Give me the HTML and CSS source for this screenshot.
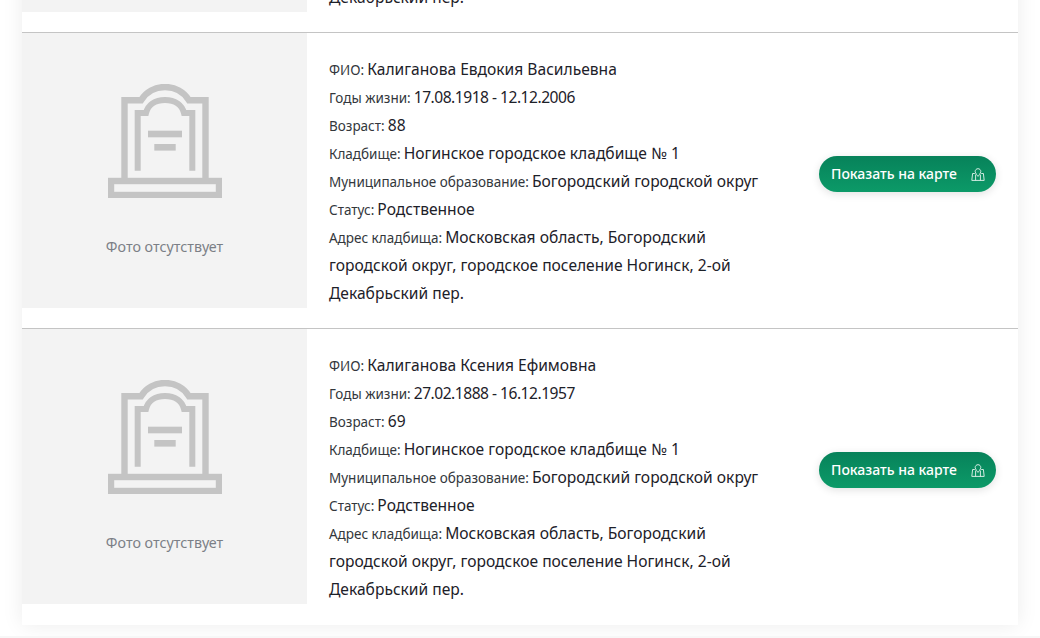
FILE: index.html
```html
<!DOCTYPE html>
<html lang="ru">
<head>
<meta charset="utf-8">
<title>Результаты поиска</title>
<link rel="stylesheet" href="styles.css">
</head>
<body>
<svg class="defs" width="0" height="0" aria-hidden="true">
  <symbol id="grave" viewBox="0 0 114 114">
    <path d="M16.5 94V16.3H33C38 8 47 3 57 3S76 8 81 16.3H97.5V94" fill="none" stroke="currentColor" stroke-width="6.4"/>
    <path d="M29.7 86.7V29H38C40 21 47 16 57 16S74 21 76 29H84.3V86.7" fill="none" stroke="currentColor" stroke-width="6"/>
    <rect x="3" y="97" width="108" height="14" fill="none" stroke="currentColor" stroke-width="6.4"/>
    <rect x="40" y="46.7" width="34" height="6.6" fill="currentColor"/>
    <rect x="46.3" y="60" width="21.4" height="6.6" fill="currentColor"/>
  </symbol>
  <symbol id="map" viewBox="0 0 14 13">
    <path d="M3.8 5.5H1.6L.8 12.4H13.2L12.4 5.5H10.2M4.6 6.5V12.4M9.4 6.5V12.4" fill="none" stroke="currentColor" stroke-width=".9"/>
    <path d="M7 .7C5.4.7 4.2 1.9 4.2 3.4C4.2 5.2 7 8.4 7 8.4S9.8 5.2 9.8 3.4C9.8 1.9 8.6.7 7 .7Z" fill="none" stroke="currentColor" stroke-width=".9"/>
  </symbol>
</svg>
<main class="card">
  <article class="row">
    <div class="photo"><svg class="grave"><use href="#grave"/></svg><p class="nophoto">Фото отсутствует</p></div>
    <div class="info">
      <p><span class="label">ФИО:</span> Калиганова Евдокия Васильевна</p>
      <p><span class="label">Годы жизни:</span> <span class="date">17.08.1918 - 12.12.2006</span></p>
      <p><span class="label">Возраст:</span> 88</p>
      <p><span class="label">Кладбище:</span> Ногинское городское кладбище № 1</p>
      <p><span class="label">Муниципальное образование:</span> Богородский городской округ</p>
      <p><span class="label">Статус:</span> Родственное</p>
      <p><span class="label">Адрес кладбища:</span> Московская область, Богородский городской округ, городское поселение Ногинск, 2-ой Декабрьский пер.</p>
    </div>
    <a class="btn" href="#"><span class="btn-text">Показать на карте</span><svg class="map"><use href="#map"/></svg></a>
  </article>
  <article class="row">
    <div class="photo"><svg class="grave"><use href="#grave"/></svg><p class="nophoto">Фото отсутствует</p></div>
    <div class="info">
      <p><span class="label">ФИО:</span> Калиганова Евдокия Васильевна</p>
      <p><span class="label">Годы жизни:</span> <span class="date">17.08.1918 - 12.12.2006</span></p>
      <p><span class="label">Возраст:</span> 88</p>
      <p><span class="label">Кладбище:</span> Ногинское городское кладбище № 1</p>
      <p><span class="label">Муниципальное образование:</span> Богородский городской округ</p>
      <p><span class="label">Статус:</span> Родственное</p>
      <p><span class="label">Адрес кладбища:</span> Московская область, Богородский городской округ, городское поселение Ногинск, 2-ой Декабрьский пер.</p>
    </div>
    <a class="btn" href="#"><span class="btn-text">Показать на карте</span><svg class="map"><use href="#map"/></svg></a>
  </article>
  <article class="row">
    <div class="photo"><svg class="grave"><use href="#grave"/></svg><p class="nophoto">Фото отсутствует</p></div>
    <div class="info">
      <p><span class="label">ФИО:</span> Калиганова Ксения Ефимовна</p>
      <p><span class="label">Годы жизни:</span> <span class="date">27.02.1888 - 16.12.1957</span></p>
      <p><span class="label">Возраст:</span> 69</p>
      <p><span class="label">Кладбище:</span> Ногинское городское кладбище № 1</p>
      <p><span class="label">Муниципальное образование:</span> Богородский городской округ</p>
      <p><span class="label">Статус:</span> Родственное</p>
      <p><span class="label">Адрес кладбища:</span> Московская область, Богородский городской округ, городское поселение Ногинск, 2-ой Декабрьский пер.</p>
    </div>
    <a class="btn" href="#"><span class="btn-text">Показать на карте</span><svg class="map"><use href="#map"/></svg></a>
  </article>
</main>
<footer class="foot"></footer>
</body>
</html>
```
FILE: styles.css
```css
html, body {
  margin: 0;
  height: 638px;
  overflow: hidden;
  background: #fff;
}
body {
  font-family: "Noto Sans", sans-serif;
  color: #1d2129;
}
.defs {
  display: block;
  height: 0;
}
.card {
  width: 996px;
  margin: -264px 0 0 22px;
  padding-bottom: 1px;
  background: #fff;
  box-shadow: 0 0 20px rgba(0, 0, 0, .08);
}
.row {
  display: flex;
  align-items: flex-start;
  height: 295px;
  border-top: 1px solid #c4c4c4;
}
.photo {
  display: flex;
  flex-direction: column;
  align-items: center;
  flex: none;
  box-sizing: border-box;
  width: 285px;
  height: 275px;
  padding-top: 51px;
  background: #f3f3f3;
}
.grave {
  width: 114px;
  height: 114px;
  color: #c4c4c4;
}
.nophoto {
  margin: 40px 0 0;
  font-size: 14.3px;
  line-height: 18px;
  color: #7b7f86;
}
.info {
  flex: none;
  box-sizing: border-box;
  width: 512px;
  padding: 22px 0 0 22px;
  font-size: 15.6px;
  line-height: 28px;
}
.info p { margin: 0; width: 440px; }
.label {
  margin-right: -1px;
  font-size: 13.5px;
  line-height: 1;
  color: #33373c;
}
.date { letter-spacing: -.5px; }
.btn {
  display: flex;
  align-items: center;
  justify-content: space-between;
  flex: none;
  box-sizing: border-box;
  width: 177px;
  height: 36px;
  margin: 123px 0 0 0;
  padding: 0 11px 0 12px;
  border-radius: 18px;
  background: linear-gradient(#07825a, #0c9a68);
  box-shadow: 0 2px 8px rgba(0, 0, 0, .12);
  color: #fff;
  font-size: 14px;
  font-weight: 500;
  text-decoration: none;
}
.btn-text { margin-top: -2px; }
.map {
  width: 14px;
  height: 13px;
  color: #e8f5ef;
}
.foot {
  height: 20px;
  margin-top: 11px;
  background: #f7f7f7;
}
```
